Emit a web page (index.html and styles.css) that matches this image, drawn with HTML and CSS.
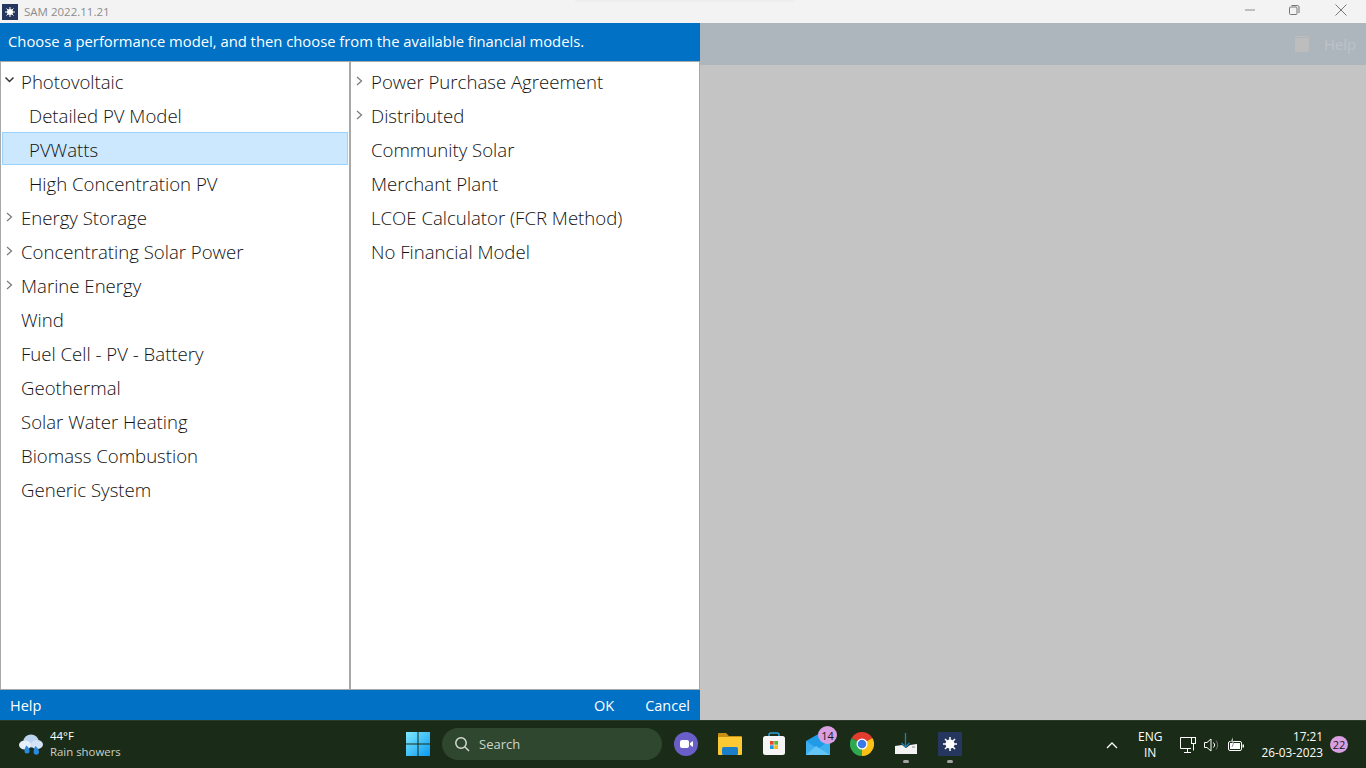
FILE: index.html
```html
<!DOCTYPE html>
<html lang="en">
<head>
<meta charset="utf-8">
<title>SAM 2022.11.21</title>
<link rel="stylesheet" href="styles.css">
</head>
<body>
<div class="titlebar">
  <div class="title-left">
    <svg class="app-icon" width="16" height="16" viewBox="0 0 16 16"><rect width="16" height="16" fill="#25365f"/><circle cx="8" cy="8" r="3" fill="#fff"/><g stroke="#fff" stroke-width="1"><path d="M8 3v10M3 8h10M4.500 4.500l7 7M11.500 4.500l-7 7"/></g></svg>
    <span class="app-name">SAM 2022.11.21</span>
  </div>
  <div class="win-controls">
    <svg class="win-min" width="12" height="12" viewBox="0 0 12 12"><path d="M1 6h10" stroke="#8a8a8a" stroke-width="1"/></svg>
    <svg width="12" height="12" viewBox="0 0 12 12" fill="none" stroke="#777"><rect x="1.500" y="3" width="7.500" height="7.500" rx="1"/><path d="M3.500 1.500h6a1.500 1.500 0 0 1 1.500 1.500v6"/></svg>
    <svg width="14" height="14" viewBox="0 0 14 14"><path d="M1.500 1.500l11 11M12.500 1.500l-11 11" stroke="#777" stroke-width="1"/></svg>
  </div>
</div>
<div class="main">
  <section class="dialog">
    <header class="dialog-head">Choose a performance model, and then choose from the available financial models.</header>
    <div class="panes">
      <div class="pane pane-left">
        <div class="row"><svg class="tw" viewBox="0 0 10 10"><path d="M1.500 1.500L5.500 5.500 9.500 1.500" class="tw-dark"/></svg><span>Photovoltaic</span></div>
        <div class="row sub"><span>Detailed PV Model</span></div>
        <div class="row sub selected"><span>PVWatts</span></div>
        <div class="row sub"><span>High Concentration PV</span></div>
        <div class="row"><svg class="tw" viewBox="0 0 10 10"><path d="M3 1L7.500 5 3 9"/></svg><span>Energy Storage</span></div>
        <div class="row"><svg class="tw" viewBox="0 0 10 10"><path d="M3 1L7.500 5 3 9"/></svg><span>Concentrating Solar Power</span></div>
        <div class="row"><svg class="tw" viewBox="0 0 10 10"><path d="M3 1L7.500 5 3 9"/></svg><span>Marine Energy</span></div>
        <div class="row plain"><span>Wind</span></div>
        <div class="row plain"><span>Fuel Cell - PV - Battery</span></div>
        <div class="row plain"><span>Geothermal</span></div>
        <div class="row plain"><span>Solar Water Heating</span></div>
        <div class="row plain"><span>Biomass Combustion</span></div>
        <div class="row plain"><span>Generic System</span></div>
      </div>
      <div class="pane pane-right">
        <div class="row"><svg class="tw" viewBox="0 0 10 10"><path d="M3 1L7.500 5 3 9"/></svg><span>Power Purchase Agreement</span></div>
        <div class="row"><svg class="tw" viewBox="0 0 10 10"><path d="M3 1L7.500 5 3 9"/></svg><span>Distributed</span></div>
        <div class="row plain"><span>Community Solar</span></div>
        <div class="row plain"><span>Merchant Plant</span></div>
        <div class="row plain"><span>LCOE Calculator (FCR Method)</span></div>
        <div class="row plain"><span>No Financial Model</span></div>
      </div>
    </div>
    <footer class="dialog-foot">
      <span>Help</span>
      <div class="foot-actions"><span>OK</span><span>Cancel</span></div>
    </footer>
  </section>
  <section class="backdrop">
    <div class="backdrop-strip">
      <svg width="14" height="16" viewBox="0 0 14 16"><path d="M0 0h14v1H0zM0 2h14v12a2 2 0 0 1-2 2H0z" fill="#bdbdbd"/></svg>
      <span>Help</span>
    </div>
  </section>
</div>
<div class="taskbar">
  <div class="weather">
    <svg width="24" height="22" viewBox="0 0 24 22"><ellipse cx="12" cy="7" rx="7.500" ry="6.500" fill="#bcd3f0"/><ellipse cx="6" cy="11" rx="6" ry="4.500" fill="#e6effa"/><ellipse cx="18" cy="10.500" rx="6" ry="4.500" fill="#d3e2f6"/><path d="M7.500 11.500c1.800 1.500 3 3 3 5.500a2.500 2.500 0 0 1-5 0c0-2 .8-4 2-5.500zM16.500 12c1.800 1.500 3.500 3.500 3.500 6a2.700 2.700 0 0 1-5.400 0c0-2.500.8-4.500 1.900-6z" fill="#2a8ae0"/></svg>
    <div class="weather-text"><span class="temp">44°F</span><span class="cond">Rain showers</span></div>
  </div>
  <div class="task-center">
    <svg class="start" width="24" height="24" viewBox="0 0 24 24"><defs><linearGradient id="w" x1="0" y1="0" x2="1" y2="1"><stop offset="0" stop-color="#7fe8ff"/><stop offset="1" stop-color="#0a9bf0"/></linearGradient></defs><path d="M0 0h11.500v11.500H0zM12.500 0H24v11.500H12.500zM0 12.500h11.500V24H0zM12.500 12.500H24V24H12.500z" fill="url(#w)"/></svg>
    <div class="search">
      <svg width="16" height="16" viewBox="0 0 16 16" fill="none" stroke="#d6dcd6" stroke-width="1.500"><circle cx="7" cy="7" r="5.200"/><path d="M11 11l4 4"/></svg>
      <span>Search</span>
    </div>
    <div class="apps">
      <div class="app"><svg width="24" height="24" viewBox="0 0 24 24"><circle cx="12" cy="12" r="12" fill="#6a5fc8"/><rect x="6" y="8" width="9" height="8" rx="2" fill="#fff"/><path d="M16 11l3-2v6l-3-2z" fill="#fff"/></svg></div>
      <div class="app"><svg width="24" height="24" viewBox="0 0 24 24"><path d="M0 2a1 1 0 0 1 1-1h7l3 3h12a1 1 0 0 1 1 1v2H0z" fill="#c98f14"/><path d="M0 5h24v17a1 1 0 0 1-1 1H1a1 1 0 0 1-1-1z" fill="#fcc934"/><rect x="4" y="15" width="16" height="8" rx="1.500" fill="#1a7fc8"/></svg></div>
      <div class="app"><svg width="24" height="24" viewBox="0 0 24 24"><path d="M7 7V3a2 2 0 0 1 2-2h6a2 2 0 0 1 2 2v4" fill="none" stroke="#2aa0d8" stroke-width="1.500"/><rect x="1" y="4" width="22" height="19" rx="2.500" fill="#f5f5f5"/><rect x="8" y="9" width="3.700" height="3.700" fill="#e8492e"/><rect x="12.300" y="9" width="3.700" height="3.700" fill="#5cb531"/><rect x="8" y="13.300" width="3.700" height="3.700" fill="#1d9be0"/><rect x="12.300" y="13.300" width="3.700" height="3.700" fill="#fbb714"/></svg></div>
      <div class="app"><svg width="24" height="24" viewBox="0 0 24 24"><path d="M0 9L14 1l10 7v15H0z" fill="#1f9be8"/><path d="M0 9l12 8 12-9v15H0z" fill="#3fb0ef"/><path d="M0 23l10-9 14 9z" fill="#63c4f5"/></svg><span class="badge badge-mail">14</span></div>
      <div class="app"><svg width="24" height="24" viewBox="0 0 48 48"><path d="M24 24L3.200 12A24 24 0 0 1 44.800 12z" fill="#e33b2e"/><path d="M24 24L3.200 12A24 24 0 0 0 24 48z" fill="#2da94f"/><path d="M24 24L24 48A24 24 0 0 0 44.800 12z" fill="#fbc116"/><circle cx="24" cy="24" r="11" fill="#fff"/><circle cx="24" cy="24" r="8.500" fill="#3b78e7"/></svg></div>
      <div class="app running"><svg width="24" height="24" viewBox="0 0 24 24"><path d="M1 14l7-1 4 3 4-3 7-1v10H1z" fill="#f3f3f3"/><path d="M11.500 1v14M7.500 11L11.500 15l4-4" fill="none" stroke="#1f7fb8" stroke-width="1.300"/><path d="M18 15h3" stroke="#888"/></svg></div>
      <div class="app running"><svg width="24" height="24" viewBox="0 0 24 24"><rect width="24" height="24" fill="#25365f"/><circle cx="12" cy="12" r="4.500" fill="#fff"/><path d="M12 5v14M5 12h14M7 7l10 10M17 7L7 17" stroke="#fff" stroke-width="1.500"/></svg></div>
    </div>
  </div>
  <div class="tray">
    <svg class="caret" width="12" height="8" viewBox="0 0 12 8"><path d="M1 7l5-5 5 5" fill="none" stroke="#fff" stroke-width="1.300"/></svg>
    <div class="lang"><span>ENG</span><span>IN</span></div>
    <div class="tray-icons">
      <svg width="16" height="16" viewBox="0 0 16 16" fill="none" stroke="#fff"><path d="M11 .500H.500v11h10.500M4 15.500h7M7.500 11.500v4"/><rect x="11.500" y=".500" width="4" height="6"/><path d="M13.500 6.500v7"/></svg>
      <svg width="16" height="16" viewBox="0 0 16 16" fill="none" stroke="#fff"><path d="M.500 5.500h2.500l4-3.500v12l-4-3.500H.500z"/><path d="M9.500 5.500a3.500 3.500 0 0 1 0 5"/><path d="M12 3.500a7 7 0 0 1 0 9" stroke="#777"/></svg>
      <svg width="16" height="16" viewBox="0 0 16 16"><rect x=".500" y="4.500" width="13" height="9" rx="1.500" fill="none" stroke="#fff"/><rect x="2" y="6" width="10" height="6" fill="#fff"/><rect x="14.500" y="7.500" width="1.500" height="3" fill="#fff"/><path d="M5 0L2.500 5H6L4 10" fill="#fff" stroke="#1a2d17" stroke-width=".5"/></svg>
    </div>
    <div class="clock"><span>17:21</span><span>26-03-2023</span></div>
    <span class="badge badge-notif">22</span>
  </div>
</div>
</body>
</html>
```
FILE: styles.css
```css
* { box-sizing: border-box; }
html, body { margin: 0; height: 100%; overflow: hidden; }
body {
  width: 1366px; height: 768px; display: flex; flex-direction: column;
  font-family: "Open Sans", "Noto Sans", sans-serif; background: #c4c4c4;
}
.titlebar {
  height: 23px; flex: none; background: #f3f3f3; display: flex;
  justify-content: space-between; align-items: center; position: relative;
}
.titlebar::before {
  content: ""; position: absolute; left: 575px; top: 0; width: 220px; height: 2px; background: #eeeeee;
}
.title-left { display: flex; align-items: center; padding-left: 2px; gap: 6px; }
.app-name { font-size: 11.500px; color: #8c8c8c; }
.win-controls { display: flex; align-items: center; gap: 34px; padding-right: 18px; margin-bottom: 3px; }
.win-min { margin-right: -2px; }
.main { flex: none; height: 697px; display: flex; }
.dialog { width: 700px; display: flex; flex-direction: column; background: #fff; }
.dialog-head {
  height: 38px; flex: none; background: #0071c5; color: #fff;
  font-size: 14.800px; line-height: 36px; padding-left: 8px; white-space: nowrap;
}
.panes { flex: 1; display: flex; border: 1px solid #a8a8a8; min-height: 0; }
.pane { padding-top: 2px; }
.pane-left { width: 350px; flex: none; border-right: 2px solid #a8a8a8; padding-left: 1px; }
.pane-right { flex: 1; }
.row {
  height: 34px; display: flex; align-items: center; font-size: 18.600px; font-weight: 300;
  color: #111; white-space: nowrap;
}
.row .tw { width: 10px; height: 10px; margin: 0 7px 0 2px; flex: none; fill: none; stroke: #7d7d7d; stroke-width: 1.300; }
.tw .tw-dark { stroke: #333; stroke-width: 1.500; }
.pane-right .row .tw { margin-left: 3px; }
.row.plain span { padding-left: 20px; }
.row.sub span { padding-left: 27px; }
.pane-left .row.plain span { padding-left: 19px; }
.row.selected {
  background: #cce8ff; border: 1px solid #99d1ff; height: 33px; margin: 0 1px 1px 0; padding-top: 2px;
}
.row.selected span { padding-left: 26px; }
.dialog-foot {
  height: 30px; flex: none; background: #0071c5; color: #fff; font-size: 14.500px;
  display: flex; justify-content: space-between; align-items: center; padding: 0 10px;
}
.foot-actions { display: flex; gap: 31px; }
.backdrop { flex: 1; }
.backdrop-strip {
  height: 42px; background: #adb6bd; color: #bdc3c7; font-size: 14.800px;
  display: flex; justify-content: flex-end; align-items: center; gap: 15px; padding-right: 10px;
}
.taskbar {
  height: 48px; flex: none; background: #1a2c17; border-top: 1px solid #2e3a2c;
  color: #fff; position: relative; display: flex; justify-content: space-between; align-items: center;
}
.weather { display: flex; align-items: center; gap: 7px; padding-left: 19px; }
.weather-text { display: flex; flex-direction: column; font-size: 11.400px; line-height: 16px; margin-top: -2px; }
.cond { color: #c9d1c8; }
.task-center { position: absolute; left: 406px; top: 7px; display: flex; align-items: center; }
.start { margin-right: 12px; }
.search {
  width: 220px; height: 32px; border-radius: 16px; background: #30472f; display: flex;
  align-items: center; gap: 9px; padding-left: 12px; font-size: 13px; color: #cdd5cc;
}
.apps { display: flex; margin-left: 12px; gap: 20px; }
.app { width: 24px; height: 24px; position: relative; }
.app.running::after {
  content: ""; position: absolute; left: 9px; bottom: -7px; width: 6px; height: 3px;
  border-radius: 2px; background: #a3a3a3;
}
.badge { background: #d8a0e0; color: #1a1a1a; border-radius: 50%; display: flex; align-items: center; justify-content: center; font-size: 11px; }
.badge-mail { position: absolute; right: -7px; top: -6px; width: 19px; height: 18px; }
.tray { display: flex; align-items: center; padding-right: 18px; height: 100%; }
.caret { margin-right: 20px; }
.lang { display: flex; flex-direction: column; align-items: center; font-size: 12px; line-height: 16px; margin-right: 18px; }
.tray-icons { display: flex; align-items: center; gap: 8px; margin-right: 17px; }
.clock { display: flex; flex-direction: column; align-items: flex-end; font-size: 11.800px; line-height: 16px; margin-top: -2px; margin-right: 7px; }
.badge-notif { width: 18px; height: 17px; }
```
